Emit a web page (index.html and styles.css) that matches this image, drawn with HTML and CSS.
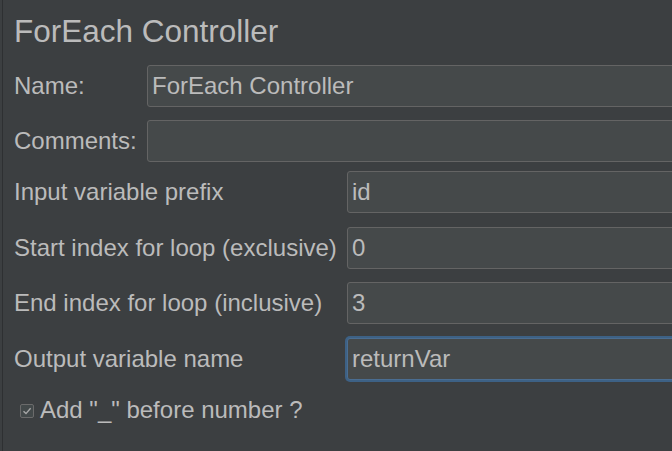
FILE: index.html
```html
<!DOCTYPE html>
<html>
<head>
<meta charset="utf-8">
<link rel="stylesheet" href="styles.css">
</head>
<body>
<div class="panel">
  <h1 class="title">ForEach Controller</h1>
  <div class="meta">
    <div class="row">
      <label class="label">Name:</label>
      <div class="field">ForEach Controller</div>
    </div>
    <div class="row">
      <label class="label">Comments:</label>
      <div class="field"></div>
    </div>
  </div>
  <div class="params">
    <div class="row">
      <label class="label">Input variable prefix</label>
      <div class="field">id</div>
    </div>
    <div class="row">
      <label class="label">Start index for loop (exclusive)</label>
      <div class="field">0</div>
    </div>
    <div class="row">
      <label class="label">End index for loop (inclusive)</label>
      <div class="field">3</div>
    </div>
    <div class="row">
      <label class="label">Output variable name</label>
      <div class="field focused">returnVar</div>
    </div>
  </div>
  <div class="check-row">
    <span class="checkbox">
      <svg width="10" height="10" viewBox="0 0 10 10"><path d="M1.5 5.2 L4 7.6 L8.6 2.2" fill="none" stroke="#a8a8a8" stroke-width="1.4"/></svg>
    </span>
    <span class="check-label">Add "_" before number ?</span>
  </div>
</div>
</body>
</html>
```
FILE: styles.css
```css
html, body {
  margin: 0;
  padding: 0;
  background: #3c3f41;
  width: 672px;
  height: 451px;
  overflow: hidden;
}
body {
  font-family: "Liberation Sans", Arial, sans-serif;
  color: #bbbbbb;
}
.panel {
  margin-left: 2px;
  border-left: 1px solid #2e3032;
  height: 451px;
  padding-left: 11px;
  box-sizing: border-box;
}
.title {
  margin: 0;
  padding-top: 12px;
  font-weight: normal;
  font-size: 31.5px;
  line-height: 38px;
  height: 53px;
}
.meta {
  display: grid;
  grid-template-columns: 133px 1fr;
  row-gap: 13px;
}
.row {
  display: contents;
}
.label {
  font-size: 24px;
  line-height: 42px;
  height: 42px;
  white-space: nowrap;
}
.field {
  height: 42px;
  box-sizing: border-box;
  border: 1px solid #646464;
  border-radius: 3px;
  background: #45494a;
  font-size: 24px;
  line-height: 40px;
  padding-left: 4px;
  white-space: nowrap;
  margin-right: -10px;
}
.params {
  margin-top: 9px;
  display: grid;
  grid-template-columns: 333px 1fr;
  row-gap: 13.5px;
}
.field.focused {
  box-shadow: 0 0 0 2px #3d6185;
  border-color: #4a6d91;
}
.check-row {
  display: flex;
  align-items: center;
  margin-top: 15px;
  padding-left: 6px;
  height: 30px;
}
.checkbox {
  width: 14px;
  height: 14px;
  box-sizing: border-box;
  border: 1px solid #6b6b6b;
  border-radius: 2px;
  background: #43494a;
  display: flex;
  align-items: center;
  justify-content: center;
  margin-right: 6px;
  margin-top: 2px;
}
.checkbox svg {
  display: block;
}
.check-label {
  font-size: 24px;
  line-height: 30px;
}
```
